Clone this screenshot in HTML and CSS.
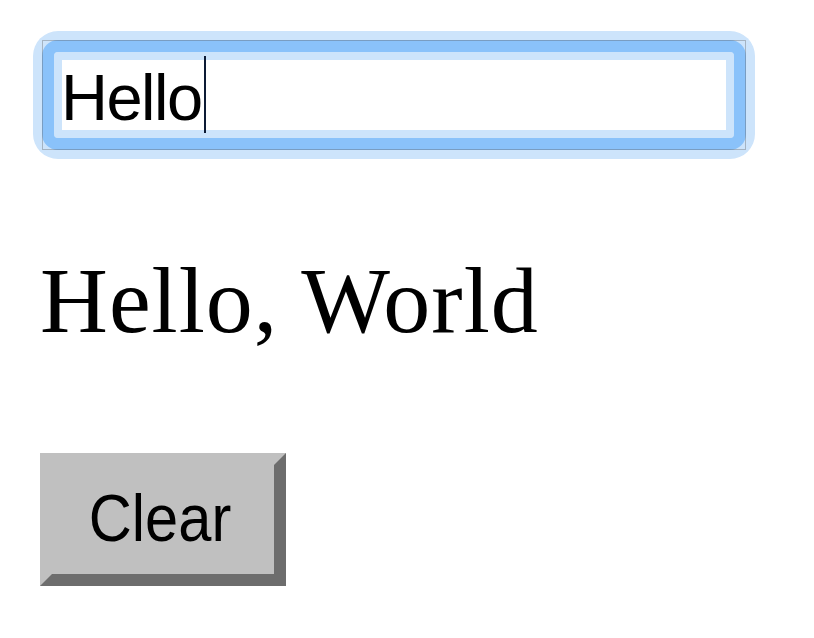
FILE: index.html
```html
<!DOCTYPE html>
<html lang="en">
<head>
<meta charset="utf-8">
<title>Hello</title>
<link rel="stylesheet" href="styles.css">
</head>
<body>
<main class="page">
  <div class="field">
    <div class="input" role="textbox">Hello<span class="caret"></span></div>
  </div>
  <p class="greeting">Hello, World</p>
  <button class="clear" type="button"><span class="clear-label">Clear</span></button>
</main>
</body>
</html>
```
FILE: styles.css
```css
body {
  margin: 0;
  background: #fff;
  font-family: "Liberation Sans", Arial, sans-serif;
}

.page {
  display: flex;
  flex-direction: column;
  align-items: flex-start;
  padding: 40px 0 0 40px;
}

.field {
  position: relative;
  margin-left: 2px;
  width: 704px;
  height: 110px;
}

.field::after {
  content: "";
  position: absolute;
  inset: 0;
  border: 1px solid rgba(90, 90, 90, 0.35);
  pointer-events: none;
}

.input {
  box-sizing: border-box;
  height: 100%;
  border: 12px solid #8ac2fa;
  border-radius: 16px;
  box-shadow: 0 0 0 9px #cde4fb, inset 0 0 0 8px #cde4fb;
  background: #fff;
  padding: 4px 0 0 7px;
  font-size: 65px;
  line-height: 80px;
  letter-spacing: -1.5px;
  color: #000;
  white-space: nowrap;
}

.caret {
  display: inline-block;
  width: 2px;
  height: 77px;
  margin-left: 2px;
  background: #0d1b35;
  vertical-align: -13px;
}

.greeting {
  margin: 103px 0 0 0;
  font-family: "Liberation Serif", "Times New Roman", serif;
  font-size: 94px;
  line-height: 94px;
  letter-spacing: 1px;
  color: #000;
}

.clear {
  box-sizing: border-box;
  margin-top: 106px;
  width: 246px;
  padding: 14px 5px 18px 0;
  border: 12px solid;
  border-color: #c0c0c0 #6d6d6d #6d6d6d #c0c0c0;
  background: #c0c0c0;
  color: #000;
  font-family: "Liberation Sans", Arial, sans-serif;
  font-size: 67px;
  line-height: 77px;
  text-align: center;
}

.clear-label {
  display: inline-block;
  transform: scaleX(0.89);
}
```
